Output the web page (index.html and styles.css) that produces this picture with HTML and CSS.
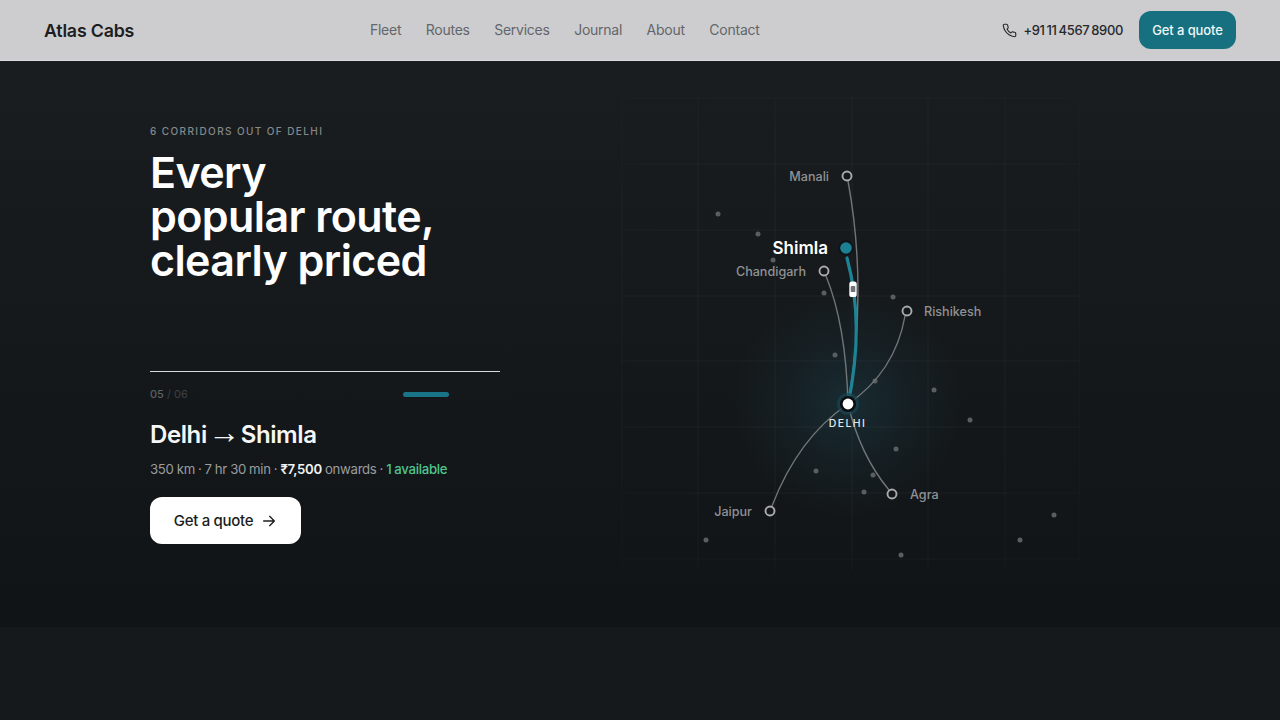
FILE: index.html
```html
<!DOCTYPE html>
<html lang="en">
<head>
  <meta charset="UTF-8">
  <meta name="viewport" content="width=device-width, initial-scale=1.0">
  <title>Atlas Cabs – Routes</title>
  <link rel="stylesheet" href="styles.css">
</head>
<body>
  <header class="site-header">
    <div class="logo">Atlas Cabs</div>
    <nav class="main-nav">
      <a href="#">Fleet</a>
      <a href="#">Routes</a>
      <a href="#">Services</a>
      <a href="#">Journal</a>
      <a href="#">About</a>
      <a href="#">Contact</a>
    </nav>
    <div class="header-actions">
      <a class="phone" href="#">
        <svg width="15" height="15" viewBox="0 0 24 24" fill="none" stroke="currentColor" stroke-width="1.8" stroke-linecap="round" stroke-linejoin="round"><path d="M22 16.9v3a2 2 0 0 1-2.2 2 19.8 19.8 0 0 1-8.6-3.1 19.5 19.5 0 0 1-6-6A19.8 19.8 0 0 1 2.1 4.2 2 2 0 0 1 4.1 2h3a2 2 0 0 1 2 1.7c.1 1 .4 1.9.7 2.8a2 2 0 0 1-.5 2.1L8.1 9.9a16 16 0 0 0 6 6l1.3-1.3a2 2 0 0 1 2.1-.4c.9.3 1.8.5 2.8.7a2 2 0 0 1 1.7 2z"/></svg>
        +91 11 4567 8900
      </a>
      <a class="header-quote" href="#">Get a quote</a>
    </div>
  </header>

  <section class="hero">
    <div class="hero-copy">
      <p class="eyebrow">6 CORRIDORS OUT OF DELHI</p>
      <h1>Every<br>popular route,<br>clearly priced</h1>

      <div class="route-card">
        <div class="progress-row">
          <span class="count"><b>05</b> / 06</span>
          <div class="segments">
            <i></i><i></i><i></i><i></i><i class="active"></i><i></i>
          </div>
        </div>
        <h2>Delhi <span class="arrow">→</span> Shimla</h2>
        <p class="meta">350 km · 7 hr 30 min · <strong>₹7,500</strong> onwards · <em>1 available</em></p>
        <a class="cta" href="#">Get a quote
          <svg width="16" height="16" viewBox="0 0 24 24" fill="none" stroke="currentColor" stroke-width="2" stroke-linecap="round" stroke-linejoin="round"><path d="M4 12h16M13 5l7 7-7 7"/></svg>
        </a>
      </div>
    </div>

    <div class="map">
      <!-- viewBox uses page coordinates -->
      <svg width="460" height="476" viewBox="620 96 460 476">
        <defs>
          <radialGradient id="glow">
            <stop offset="0" stop-color="#1d4a56" stop-opacity=".42"/>
            <stop offset=".55" stop-color="#1b3d47" stop-opacity=".2"/>
            <stop offset="1" stop-color="#1b3d47" stop-opacity="0"/>
          </radialGradient>
          <radialGradient id="grid-fade" gradientUnits="userSpaceOnUse" cx="850" cy="334" r="330">
            <stop offset=".6" stop-color="#fff"/>
            <stop offset="1" stop-color="#777"/>
          </radialGradient>
          <mask id="grid-mask" maskUnits="userSpaceOnUse" x="620" y="96" width="460" height="476">
            <rect x="620" y="96" width="460" height="476" fill="url(#grid-fade)"/>
          </mask>
        </defs>

        <circle cx="848" cy="404" r="115" fill="url(#glow)"/>

        <g class="grid" mask="url(#grid-mask)">
          <path d="M622 98V570M698 98V570M775 98V570M852 98V570M928 98V570M1005 98V570M1080 98V570"/>
          <path d="M622 98H1080M622 164H1080M622 230H1080M622 296H1080M622 361H1080M622 427H1080M622 493H1080M622 559H1080"/>
        </g>

        <g class="dots">
          <circle cx="718" cy="214" r="2.5"/><circle cx="758" cy="234" r="2.5"/>
          <circle cx="773" cy="260" r="2.5"/><circle cx="824" cy="293" r="2.5"/>
          <circle cx="893" cy="297" r="2.5"/><circle cx="835" cy="355" r="2.5"/>
          <circle cx="875" cy="381" r="2.5"/><circle cx="934" cy="390" r="2.5"/>
          <circle cx="970" cy="420" r="2.5"/><circle cx="896" cy="449" r="2.5"/>
          <circle cx="816" cy="471" r="2.5"/><circle cx="873" cy="475" r="2.5"/>
          <circle cx="864" cy="492" r="2.5"/><circle cx="706" cy="540" r="2.5"/>
          <circle cx="901" cy="555" r="2.5"/><circle cx="1020" cy="540" r="2.5"/>
          <circle cx="1054" cy="515" r="2.5"/>
        </g>

        <g class="routes">
          <path d="M848 404Q868 290 848 181"/>
          <path d="M848 404Q846 325 826 276"/>
          <path d="M848 404Q895 372 905 316"/>
          <path d="M848 404Q798 438 772 506"/>
          <path d="M848 404Q860 455 889 490"/>
        </g>
        <path class="route-active" d="M848 404Q865 325 847 258"/>

        <g class="stop">
          <circle cx="847" cy="176" r="4.5"/><circle cx="824" cy="271" r="4.5"/>
          <circle cx="907" cy="311" r="4.5"/><circle cx="770" cy="511" r="4.5"/>
          <circle cx="892" cy="494" r="4.5"/>
        </g>

        <circle cx="846" cy="248" r="7.5" fill="#0f1316"/>
        <circle cx="846" cy="248" r="5.8" fill="#1b8093"/>

        <circle cx="848" cy="404" r="11" fill="#1a4650" fill-opacity=".7"/>
        <circle cx="848" cy="404" r="8" fill="#0b0e10"/>
        <circle cx="848" cy="404" r="5.4" fill="#fff"/>

        <!-- car -->
        <rect x="849.3" y="281.5" width="7.4" height="15.5" rx="2.6" fill="#fff"/>
        <rect x="850.7" y="286" width="4.6" height="6" rx=".8" fill="#6f7376"/>

        <text class="label" x="829" y="180.5" text-anchor="end">Manali</text>
        <text class="label label-on" x="828" y="253.5" text-anchor="end">Shimla</text>
        <text class="label" x="806" y="275.5" text-anchor="end">Chandigarh</text>
        <text class="label" x="924" y="315.5">Rishikesh</text>
        <text class="label" x="910" y="498.5">Agra</text>
        <text class="label" x="752" y="515.5" text-anchor="end">Jaipur</text>
        <text class="label-hub" x="847.5" y="427" text-anchor="middle">DELHI</text>
      </svg>
    </div>
  </section>
</body>
</html>
```

FILE: styles.css
```css
* {
  box-sizing: border-box;
}

body {
  margin: 0;
  height: 720px;
  overflow: hidden;
  background: #15191c;
  font-family: 'Inter', 'Liberation Sans', sans-serif;
  color: #fff;
}

a {
  text-decoration: none;
  color: inherit;
}

/* Header */
.site-header {
  height: 61px;
  display: flex;
  align-items: center;
  justify-content: space-between;
  padding: 0 44px;
  background: #cdcdcf;
  border-bottom: 1px solid #dcdcdd;
}

.logo {
  font-size: 17.8px;
  font-weight: 600;
  letter-spacing: -0.2px;
  color: #1c1e21;
}

.main-nav {
  display: flex;
  gap: 24.5px;
  margin: 0 7px 2px 0;
  font-size: 14px;
  letter-spacing: -0.25px;
  color: #63666a;
}

.header-actions {
  display: flex;
  align-items: center;
  gap: 16px;
}

.phone {
  display: flex;
  align-items: center;
  gap: 6px;
  font-size: 13px;
  font-weight: 500;
  letter-spacing: -0.35px;
  word-spacing: -1.2px;
  color: #26282b;
}

.header-quote {
  width: 97px;
  height: 38px;
  display: flex;
  align-items: center;
  justify-content: center;
  background: #17707f;
  border-radius: 12px;
  font-size: 13px;
  font-weight: 500;
  letter-spacing: -0.1px;
  color: #eef6f7;
}

/* Hero */
.hero {
  height: 566px;
  display: flex;
  padding-left: 150px;
  background: linear-gradient(180deg, #191d20 0%, #111416 100%);
}

.hero-copy {
  width: 350px;
  padding-top: 63px;
}

.eyebrow {
  margin: 0 0 12px;
  font-size: 10px;
  line-height: 14px;
  letter-spacing: 1.4px;
  font-weight: 500;
  color: #85888b;
}

h1 {
  margin: 0;
  font-size: 43px;
  line-height: 44px;
  font-weight: 600;
  letter-spacing: -0.6px;
  color: #fff;
}

.route-card {
  margin-top: 89px;
  border-top: 1px solid #d8d9da;
}

.progress-row {
  display: flex;
  align-items: center;
  justify-content: space-between;
  margin-top: 15px;
  height: 14px;
}

.count {
  font-size: 11px;
  color: #3c4043;
}

.count b {
  font-weight: 500;
  color: #5d6164;
}

.segments {
  display: flex;
  gap: 5px;
}

.segments i {
  display: block;
  width: 46px;
  height: 5px;
  border-radius: 3px;
  background: #15181b;
}

.segments i.active {
  background: #1a7488;
}

h2 {
  margin: 19px 0 0;
  font-size: 24px;
  line-height: 30px;
  font-weight: 600;
  letter-spacing: -0.4px;
  color: #f6f6f6;
}

.arrow {
  margin: 0 -4.5px;
  font-family: 'Liberation Sans', sans-serif;
  font-size: 32px;
  line-height: 0;
  font-weight: 400;
}

.meta {
  margin: 9px 0 0;
  font-size: 13.2px;
  line-height: 20px;
  letter-spacing: -0.3px;
  word-spacing: -0.3px;
  color: #9a9d9f;
}

.meta strong {
  font-weight: 600;
  color: #f2f2f2;
}

.meta em {
  font-style: normal;
  font-weight: 500;
  color: #4fc48f;
}

.cta {
  margin-top: 18px;
  width: 151px;
  height: 47px;
  display: flex;
  align-items: center;
  justify-content: center;
  gap: 8px;
  background: #fff;
  border-radius: 12px;
  font-size: 15px;
  font-weight: 500;
  letter-spacing: -0.3px;
  color: #1b1d20;
}

/* Map */
.map {
  width: 460px;
  height: 476px;
  margin: 35px 0 0 120px;
}

.map svg {
  display: block;
}

.grid path {
  fill: none;
  stroke: #fff;
  stroke-opacity: 0.04;
  stroke-width: 1;
}

.dots circle {
  fill: #5b5e61;
}

.routes path {
  fill: none;
  stroke: #727577;
  stroke-width: 1.4;
}

.route-active {
  fill: none;
  stroke: #1f8396;
  stroke-width: 3.2;
  stroke-linecap: round;
}

.stop circle {
  fill: #14181b;
  stroke: #a9abac;
  stroke-width: 1.9;
}

.label {
  font-size: 12.6px;
  font-weight: 500;
  fill: #8f9294;
}

.label-on {
  font-size: 17px;
  font-weight: 600;
  fill: #fff;
}

.label-hub {
  font-size: 10.5px;
  font-weight: 500;
  letter-spacing: 1.4px;
  fill: #e4e6e7;
}
```
